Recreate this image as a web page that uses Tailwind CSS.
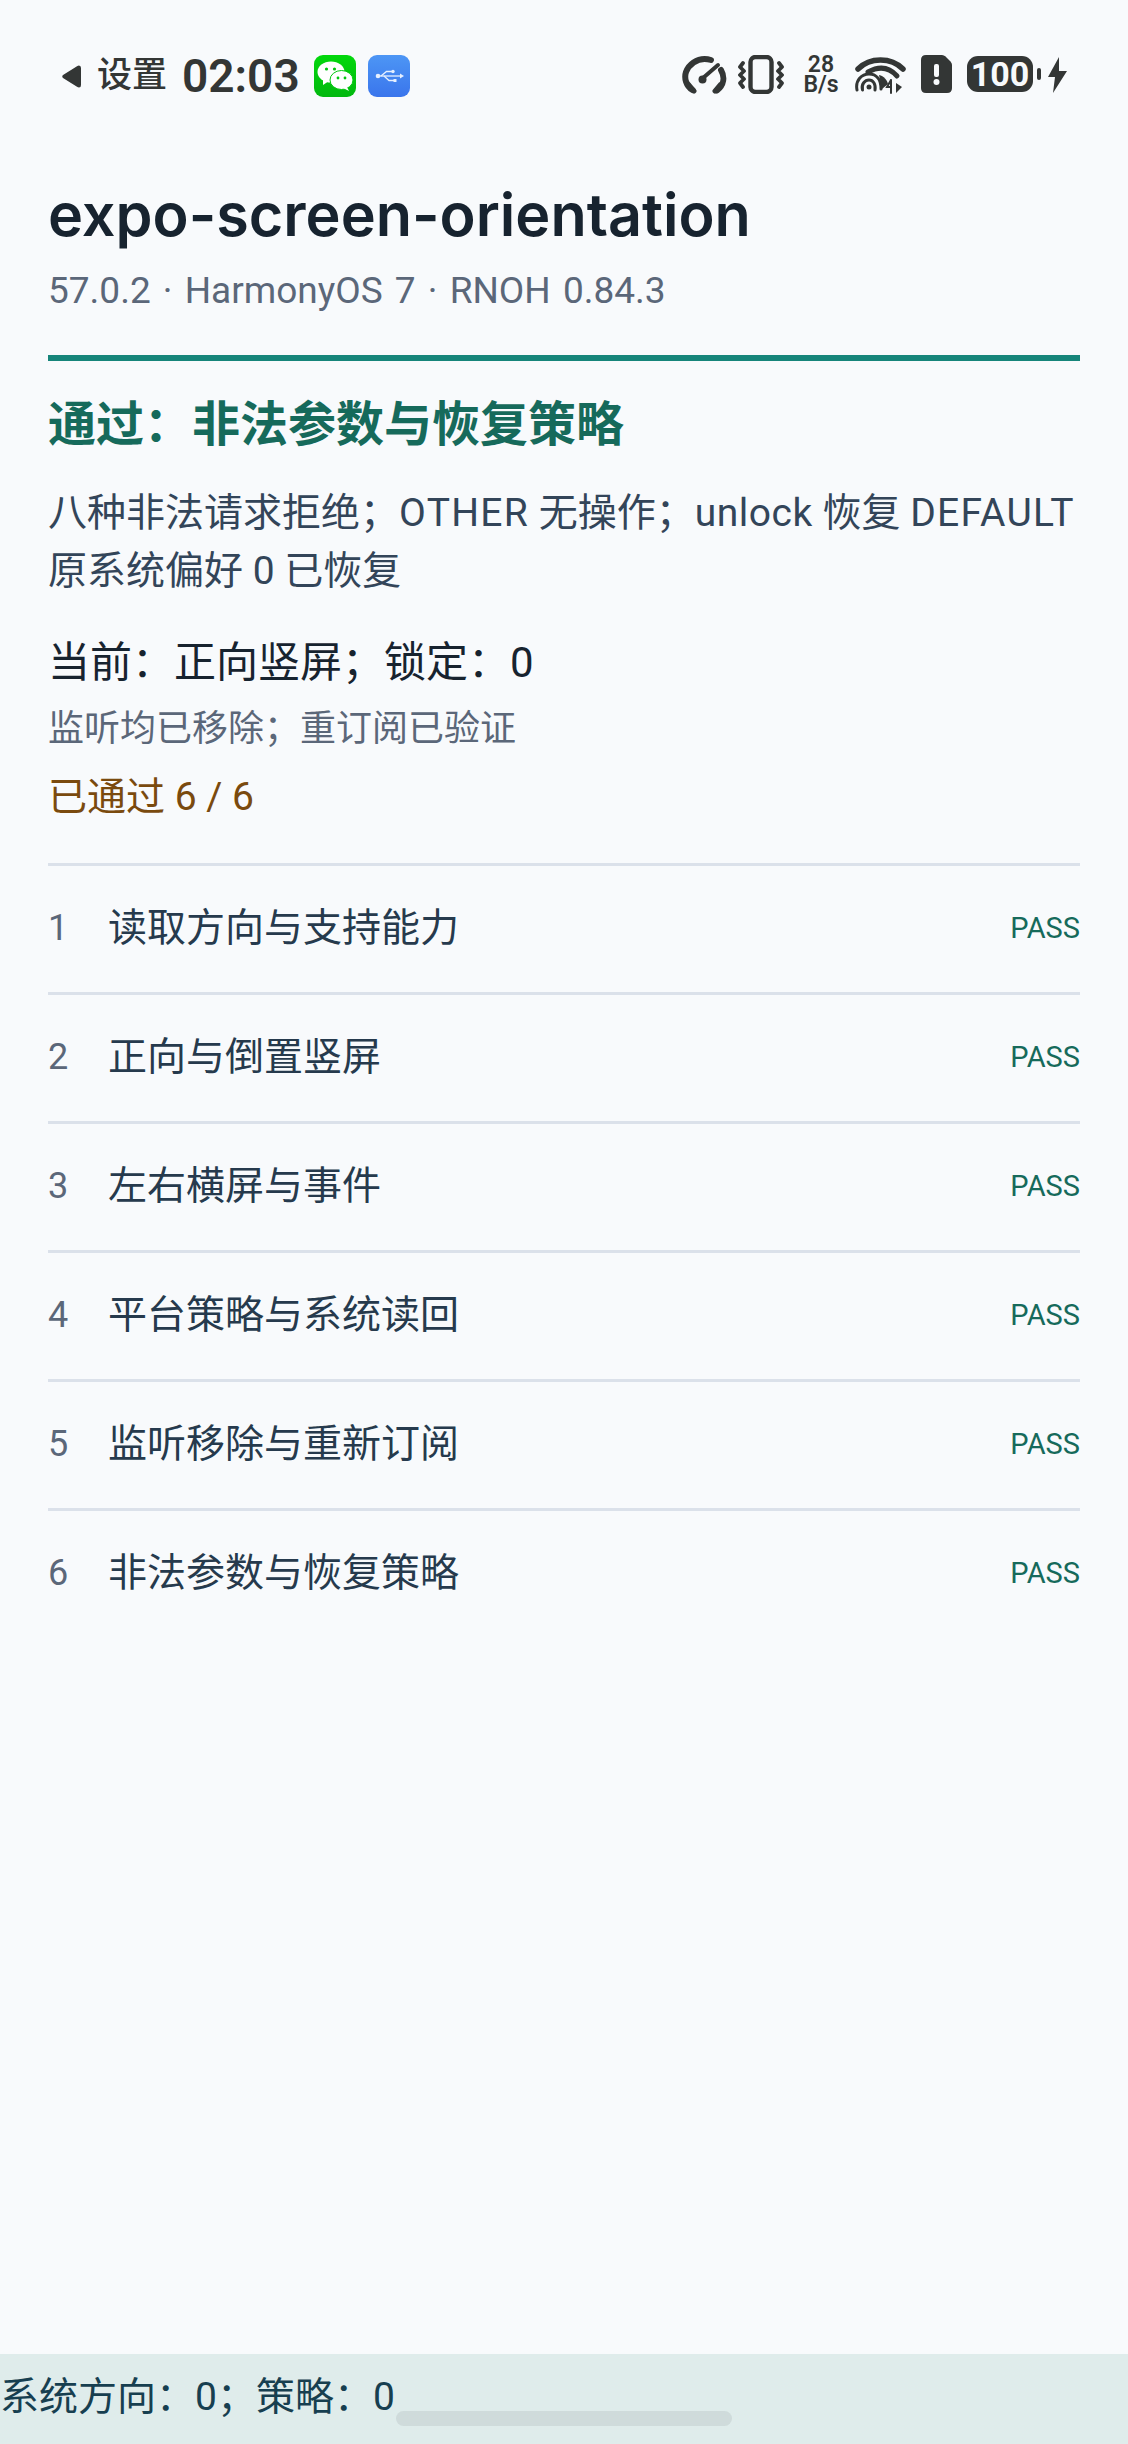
<!DOCTYPE html>
<html lang="zh-CN">
<head>
    <meta charset="UTF-8">
    <title>expo-screen-orientation</title>
    <script src="https://cdn.jsdelivr.net/npm/@tailwindcss/browser@4"></script>
</head>
<body class="bg-[#f8fafc] font-['Roboto','Noto_Sans_CJK_SC',sans-serif]">
    <div class="relative w-[1128px] h-[2444px] flex flex-col overflow-hidden">
        <!-- Status bar -->
        <div class="h-[152px] shrink-0 flex justify-between items-start pt-[55px] pl-[62px] pr-[61px] text-[#333635]">
            <div class="flex items-center h-[42px]">
                <svg width="19" height="23" viewBox="0 0 19 23"><path d="M17 0.5 Q19 0.5 19 3 L19 20 Q19 22.5 17 22.5 Q16 22.5 15 21.7 L1 13 Q-0.5 11.5 1 10 L15 1.3 Q16 0.5 17 0.5Z" fill="currentColor"/></svg>
                <span class="ml-[16px] text-[35px] leading-[42px] font-medium">设置</span>
                <span class="ml-[15px] w-[117px] text-[46px] leading-[42px] font-semibold whitespace-nowrap">02:03</span>
                <svg class="ml-[15px]" width="42" height="42" viewBox="0 0 42 42">
                    <defs><linearGradient id="wx" x1="0" y1="0" x2="0" y2="1"><stop offset="0" stop-color="#02d80c"/><stop offset="1" stop-color="#02b80f"/></linearGradient></defs>
                    <rect width="42" height="42" rx="9" fill="url(#wx)"/>
                    <ellipse cx="17" cy="17" rx="13.5" ry="10.5" fill="#fff"/>
                    <path d="M9 24 L9 30 L15 26Z" fill="#fff"/>
                    <ellipse cx="27.5" cy="25" rx="11.5" ry="9.5" fill="#fff" stroke="#02c80e" stroke-width="1"/>
                    <path d="M33 32 L35 36 L29 33Z" fill="#fff"/>
                    <circle cx="12.5" cy="14" r="1.6" fill="#02c80e"/><circle cx="20.5" cy="14" r="1.6" fill="#02c80e"/>
                    <circle cx="24" cy="23" r="1.4" fill="#02c80e"/><circle cx="31" cy="23" r="1.4" fill="#02c80e"/>
                </svg>
                <svg class="ml-[12px]" width="42" height="42" viewBox="0 0 42 42">
                    <defs><linearGradient id="usb" x1="0" y1="0" x2="0" y2="1"><stop offset="0" stop-color="#4d96f5"/><stop offset="1" stop-color="#3a75ec"/></linearGradient></defs>
                    <rect width="42" height="42" rx="9" fill="url(#usb)"/>
                    <g stroke="#e6f0ff" stroke-width="1.3" fill="none">
                        <path d="M10 21 H33"/>
                        <path d="M13 21 L18.5 16.5 H24"/>
                        <path d="M16 21 L21 25.5 H26"/>
                    </g>
                    <circle cx="10" cy="21" r="2.3" fill="#e6f0ff"/>
                    <circle cx="25" cy="16.5" r="1.7" fill="#e6f0ff"/>
                    <rect x="25.5" y="24" width="3" height="3" fill="#e6f0ff"/>
                    <path d="M32 18.5 L36 21 L32 23.5Z" fill="#e6f0ff"/>
                </svg>
            </div>
            <div class="flex items-start">
                <!-- speed -->
                <svg class="mt-[1px]" width="45" height="38" viewBox="0 0 45 38" fill="none" stroke="currentColor" stroke-width="6" stroke-linecap="round">
                    <path d="M10.5 34 C4 30 2 22 4 16 C7 8 15 3 22.5 3 C25 3 27 3.4 29 4"/>
                    <path d="M39 14 C43 21 42 29 35 34.5"/>
                    <path d="M7 29 L12 35 M38 29 L33 35" stroke-width="5"/>
                    <path d="M21 22 L36 9" stroke-width="4"/>
                    <circle cx="20.5" cy="23.5" r="4" fill="currentColor" stroke="none"/>
                </svg>
                <!-- vibrate -->
                <svg class="ml-[11px]" width="46" height="39" viewBox="0 0 46 39" fill="none" stroke="currentColor">
                    <rect x="12.5" y="2" width="21" height="35" rx="5" stroke-width="4.4"/>
                    <path d="M5 8 L2 12 L6 16 L2 20 L6 24 L2 28 L5 32" stroke-width="3.8" stroke-linejoin="round" stroke-linecap="round"/>
                    <path d="M41 8 L44 12 L40 16 L44 20 L40 24 L44 28 L41 32" stroke-width="3.8" stroke-linejoin="round" stroke-linecap="round"/>
                </svg>
                <!-- net speed -->
                <div class="ml-[20px] w-[34px] flex flex-col items-center font-semibold text-[23px] leading-[20px] whitespace-nowrap">
                    <span>28</span>
                    <span>B/s</span>
                </div>
                <!-- wifi -->
                <svg class="ml-[17px] mt-[1px]" width="51" height="38" viewBox="0 0 51 38" fill="none" stroke="currentColor" stroke-linecap="round">
                    <path d="M3 13 C15 1 36 1 48 13" stroke-width="5.5"/>
                    <path d="M13 16 C24 10 34 11 42 20" stroke-width="5"/>
                    <path d="M2 34 C0 24 7 18 14 18 C21 18 26 23 26 33" stroke-width="3"/>
                    <path d="M7.5 34 C6 28 10 24 14 24 C18 24 21 28 20 34" stroke-width="3"/>
                    <circle cx="14" cy="31" r="2.5" fill="currentColor" stroke="none"/>
                    <path d="M24 19 C29 20 32 24 33 28 L27 33 Z" fill="currentColor" stroke="none"/>
                    <path d="M36 24 L36 37 M36 24 L32 31 L36 31" stroke-width="2" />
                    <path d="M41 37 L41 27 L47 31 Z" fill="currentColor" stroke="none"/>
                </svg>
                <!-- notice -->
                <svg class="ml-[15px]" width="31" height="38" viewBox="0 0 31 38">
                    <path d="M5 0 H21 Q23 0 24.5 1.5 L29.5 6.5 Q31 8 31 10 V33 Q31 38 26 38 H5 Q0 38 0 33 V5 Q0 0 5 0Z" fill="currentColor"/>
                    <rect x="13" y="9" width="5" height="13" rx="2" fill="#f8fafc"/>
                    <circle cx="15.5" cy="27" r="3" fill="#f8fafc"/>
                </svg>
                <!-- battery -->
                <div class="ml-[15px] mt-[1px] w-[66px] h-[36px] rounded-[11px] bg-[#333635] text-[#f8fafc] flex items-center justify-center text-[34px] leading-[36px] font-bold">100</div>
                <div class="ml-[4px] mt-[13px] w-[4px] h-[12px] rounded-[2px] bg-[#333635]"></div>
                <svg class="ml-[6px] mt-[2px]" width="20" height="36" viewBox="0 0 20 36"><path d="M12 0 L1 20 H8 L6 36 L20 14 H12Z" fill="currentColor"/></svg>
            </div>
        </div>

        <main class="flex-1 px-[48px]">
            <!-- Title -->
            <h1 class="mt-[32px] font-['Inter','Noto_Sans_CJK_SC',sans-serif] text-[59.3px] leading-[62px] font-semibold text-[#17232f]">expo-screen-orientation</h1>
            <p class="mt-[22px] text-[37px] leading-[46px] text-[#5b6779] [word-spacing:3px]">57.0.2 · HarmonyOS 7 · RNOH 0.84.3</p>

            <!-- Result -->
            <div class="mt-[41px] border-t-[6px] border-[#16857a] pt-[34px]">
                <h2 class="text-[48px] leading-[60px] font-semibold text-[#166a5b]">通过：非法参数与恢复策略</h2>
                <p class="mt-[29px] text-[39px] leading-[58px] text-[#334559] whitespace-nowrap">八种非法请求拒绝；<span class="tracking-[1.3px]">OTHER</span> 无操作；<span class="tracking-[0.5px]">unlock</span> 恢复 <span class="tracking-[1.3px]">DEFAULT</span></p>
                <p class="text-[39px] leading-[58px] text-[#334559]">原系统偏好 0 已恢复</p>
                <p class="mt-[34px] text-[42px] leading-[58px] text-[#17232f]">当前：正向竖屏；锁定：0</p>
                <p class="mt-[11px] text-[36px] leading-[52px] text-[#5b6779]">监听均已移除；重订阅已验证</p>
                <p class="mt-[16px] text-[39px] leading-[52px] text-[#7a4a0e]">已通过 6 / 6</p>
            </div>

            <!-- Checks -->
            <ul class="mt-[40px]">
                <li class="h-[129px] pb-[2px] border-t-[3px] border-[#dbe1ea] flex items-center">
                    <span class="w-[60px] text-[36px] text-[#5b6779]">1</span>
                    <span class="flex-1 text-[39px] text-[#263a4d]">读取方向与支持能力</span>
                    <span class="mt-[2px] text-[29px] text-[#166a5b]">PASS</span>
                </li>
                <li class="h-[129px] pb-[2px] border-t-[3px] border-[#dbe1ea] flex items-center">
                    <span class="w-[60px] text-[36px] text-[#5b6779]">2</span>
                    <span class="flex-1 text-[39px] text-[#263a4d]">正向与倒置竖屏</span>
                    <span class="mt-[2px] text-[29px] text-[#166a5b]">PASS</span>
                </li>
                <li class="h-[129px] pb-[2px] border-t-[3px] border-[#dbe1ea] flex items-center">
                    <span class="w-[60px] text-[36px] text-[#5b6779]">3</span>
                    <span class="flex-1 text-[39px] text-[#263a4d]">左右横屏与事件</span>
                    <span class="mt-[2px] text-[29px] text-[#166a5b]">PASS</span>
                </li>
                <li class="h-[129px] pb-[2px] border-t-[3px] border-[#dbe1ea] flex items-center">
                    <span class="w-[60px] text-[36px] text-[#5b6779]">4</span>
                    <span class="flex-1 text-[39px] text-[#263a4d]">平台策略与系统读回</span>
                    <span class="mt-[2px] text-[29px] text-[#166a5b]">PASS</span>
                </li>
                <li class="h-[129px] pb-[2px] border-t-[3px] border-[#dbe1ea] flex items-center">
                    <span class="w-[60px] text-[36px] text-[#5b6779]">5</span>
                    <span class="flex-1 text-[39px] text-[#263a4d]">监听移除与重新订阅</span>
                    <span class="mt-[2px] text-[29px] text-[#166a5b]">PASS</span>
                </li>
                <li class="h-[129px] pb-[2px] border-t-[3px] border-[#dbe1ea] flex items-center">
                    <span class="w-[60px] text-[36px] text-[#5b6779]">6</span>
                    <span class="flex-1 text-[39px] text-[#263a4d]">非法参数与恢复策略</span>
                    <span class="mt-[2px] text-[29px] text-[#166a5b]">PASS</span>
                </li>
            </ul>
        </main>

        <!-- Footer -->
        <div class="h-[90px] shrink-0 bg-[#dfeceb] text-[39px] leading-[86px] text-[#173f50]">系统方向：0；策略：0</div>
        <div class="absolute left-[396px] top-[2411px] w-[336px] h-[15px] rounded-full bg-[#cfdbdb]"></div>
    </div>
</body>
</html>
